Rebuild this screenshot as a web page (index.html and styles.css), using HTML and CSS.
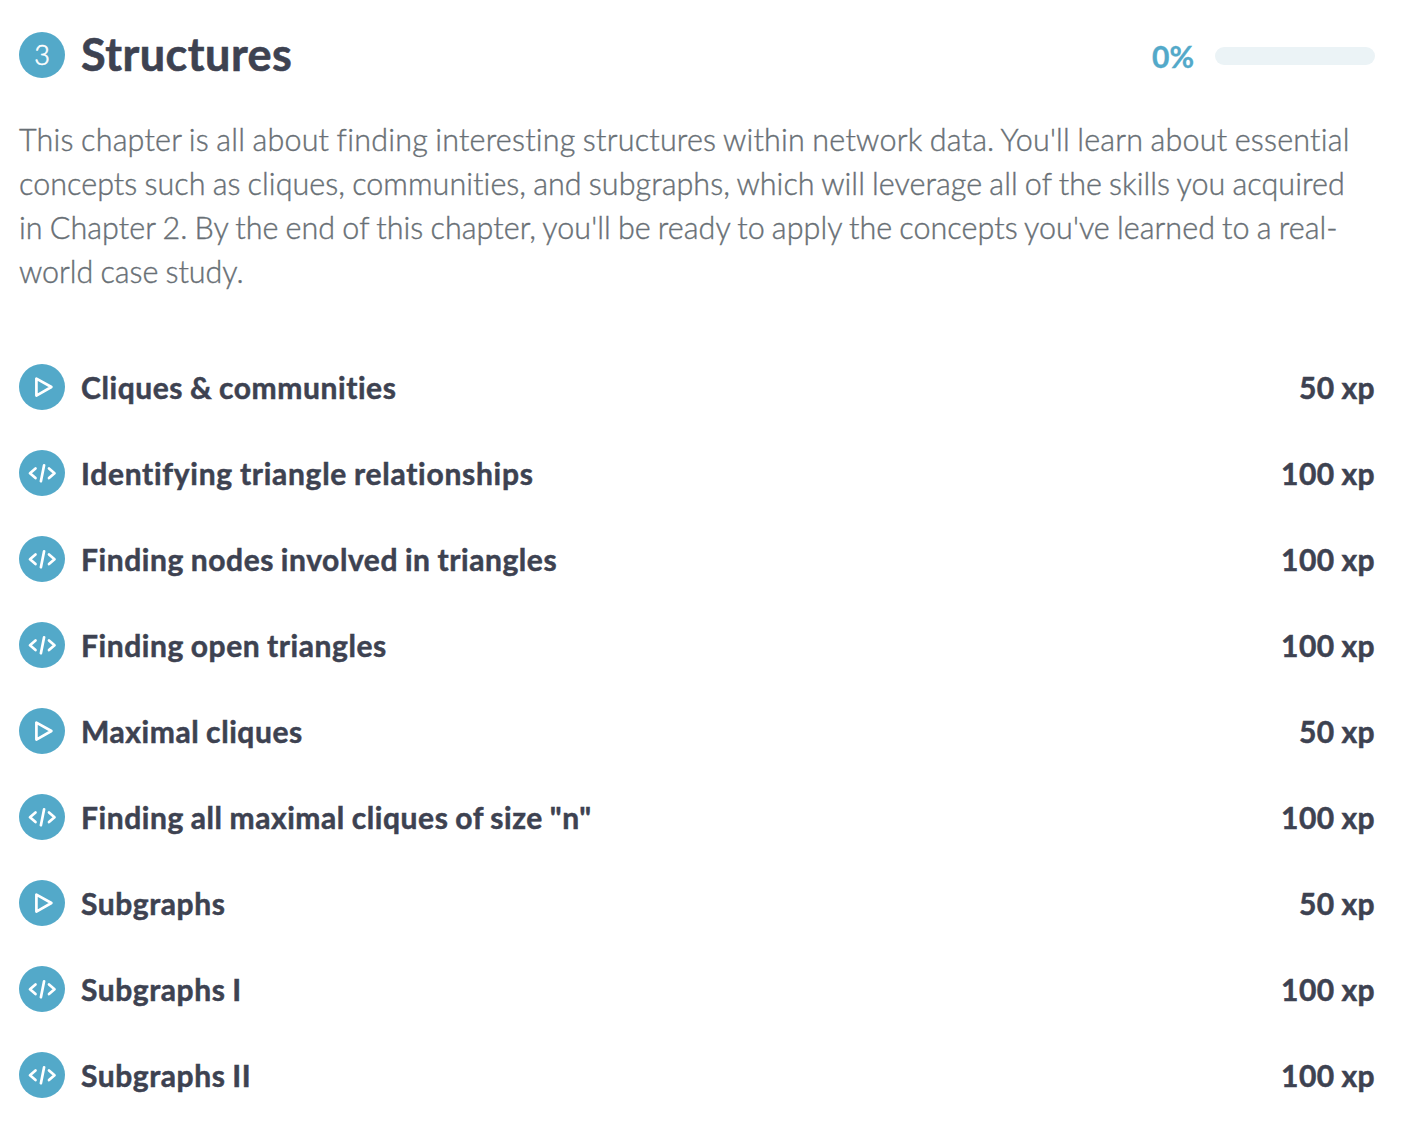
FILE: index.html
```html
<!DOCTYPE html>
<html lang="en">
<head>
<meta charset="utf-8">
<title>Structures</title>
<link rel="stylesheet" href="styles.css">
</head>
<body>
<svg class="defs" aria-hidden="true">
  <symbol id="play" viewBox="0 0 46 46"><path d="M17.4 14.6v17L32.4 23z"/></symbol>
  <symbol id="code" viewBox="0 0 46 46"><path d="M16.5 18.5l-5.5 4.8 5.5 4.8M30 18.5l5.5 4.8-5.5 4.8M25.1 15.3l-3.2 16"/></symbol>
</svg>
<main class="chapter">
  <header class="chapter-head">
    <span class="badge">3</span>
    <h1 class="title">Structures</h1>
    <span class="percent">0%</span>
    <span class="progress"></span>
  </header>
  <p class="description"><span class="line-loose">This chapter is all about finding interesting structures within network data. You'll learn about essential</span><br><span class="line-snug">concepts such as cliques, communities, and subgraphs, which will leverage all of the skills you acquired</span><br>in Chapter 2. By the end of this chapter, you'll be ready to apply the concepts you've learned to a real-<br><span class="line-tight">world case study.</span></p>
  <ul class="exercises">
    <li class="exercise"><svg class="badge"><use href="#play"/></svg><span class="name">Cliques &amp; communities</span><span class="xp">50 xp</span></li>
    <li class="exercise"><svg class="badge"><use href="#code"/></svg><span class="name name-wide">Identifying triangle relationships</span><span class="xp">100 xp</span></li>
    <li class="exercise"><svg class="badge"><use href="#code"/></svg><span class="name">Finding nodes involved in triangles</span><span class="xp">100 xp</span></li>
    <li class="exercise"><svg class="badge"><use href="#code"/></svg><span class="name">Finding open triangles</span><span class="xp">100 xp</span></li>
    <li class="exercise"><svg class="badge"><use href="#play"/></svg><span class="name">Maximal cliques</span><span class="xp">50 xp</span></li>
    <li class="exercise"><svg class="badge"><use href="#code"/></svg><span class="name">Finding all maximal cliques of size "n"</span><span class="xp">100 xp</span></li>
    <li class="exercise"><svg class="badge"><use href="#play"/></svg><span class="name">Subgraphs</span><span class="xp">50 xp</span></li>
    <li class="exercise"><svg class="badge"><use href="#code"/></svg><span class="name">Subgraphs I</span><span class="xp">100 xp</span></li>
    <li class="exercise"><svg class="badge"><use href="#code"/></svg><span class="name">Subgraphs II</span><span class="xp">100 xp</span></li>
  </ul>
</main>
</body>
</html>
```
FILE: styles.css
```css
body {
  margin: 0;
  background: #fff;
  color: #3d4251;
  font-family: Lato, sans-serif;
  font-variant-ligatures: none;
}
.defs { display: none; }
.chapter { padding: 32px 27px 0 19px; }
.chapter-head { display: flex; align-items: center; height: 46px; }
.badge {
  flex: none;
  width: 46px;
  height: 46px;
  border-radius: 50%;
  background: #53a9c9;
  color: #fff;
  font-size: 27px;
  font-weight: 300;
  line-height: 46px;
  text-align: center;
  -webkit-text-stroke: 0.6px;
  fill: none;
  stroke: #fff;
  stroke-width: 2.7;
  stroke-linecap: round;
  stroke-linejoin: round;
}
.title { flex: 1; margin: 0 0 0 16px; padding-bottom: 3px; font-size: 45px; line-height: 46px; font-weight: 700; letter-spacing: 0.5px; -webkit-text-stroke: 0.6px; }
.percent { margin-right: 21px; padding-top: 2px; font-size: 30px; line-height: 46px; font-weight: 700; color: #53a9c9; -webkit-text-stroke: 0.3px; }
.progress { width: 160px; height: 18px; margin-top: 2px; border-radius: 9px; background: #ebf3f6; }
.description {
  margin: 39px 0 0;
  font-size: 30.5px;
  line-height: 44px;
  font-weight: 300;
  color: #686f75;
  letter-spacing: 0.05px;
  word-spacing: -1.2px;
  white-space: nowrap;
  -webkit-text-stroke: 0.4px;
}
.line-loose { letter-spacing: 0.21px; }
.line-snug { letter-spacing: 0.05px; }
.line-tight { letter-spacing: -0.02px; }
.exercises {
  display: flex;
  flex-direction: column;
  gap: 40px;
  margin: 71px 0 0;
  padding: 0;
  list-style: none;
}
.exercise {
  display: flex;
  align-items: center;
  height: 46px;
  font-size: 30px;
  line-height: 46px;
  font-weight: 700;
  letter-spacing: 0.57px;
  word-spacing: -1px;
  -webkit-text-stroke: 0.5px;
}
.name { flex: 1; margin-left: 16px; }
.name-wide { letter-spacing: 0.72px; }
.xp { letter-spacing: 0.45px; }
```
